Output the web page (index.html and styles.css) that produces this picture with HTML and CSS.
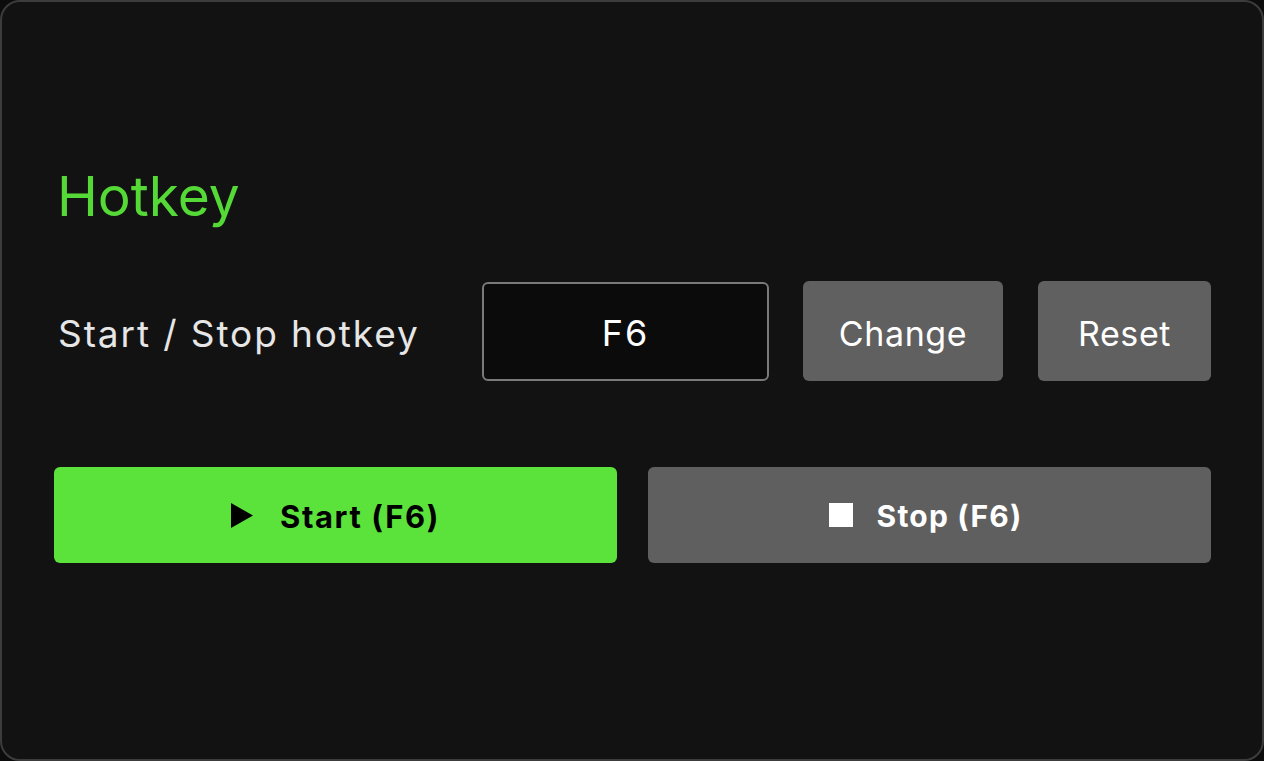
FILE: index.html
```html
<!DOCTYPE html>
<html lang="en">
<head>
    <meta charset="UTF-8">
    <meta name="viewport" content="width=device-width, initial-scale=1.0">
    <title>Hotkey</title>
    <link rel="stylesheet" href="styles.css">
</head>
<body>

<!-- Window -->
<div class="window">
    <h1 class="title">Hotkey</h1>

    <!-- Hotkey row -->
    <div class="hotkey-row">
        <span class="label">Start / Stop hotkey</span>
        <div class="key-box">F6</div>
        <button class="btn btn-change">Change</button>
        <button class="btn btn-reset">Reset</button>
    </div>

    <!-- Start / Stop -->
    <div class="action-row">
        <button class="action action-start">
            <svg width="22" height="25" viewBox="0 0 22 25"><polygon points="0,0 22,12.5 0,25" fill="#000"/></svg>
            <span>Start&nbsp;(F6)</span>
        </button>
        <button class="action action-stop">
            <span class="stop-square"></span>
            <span>Stop (F6)</span>
        </button>
    </div>
</div>

</body>
</html>
```

FILE: styles.css
```css
html, body {
    margin: 0;
    background-color: #0c0c0c;
}
body {
    font-family: Inter, "Liberation Sans", Arial, sans-serif;
}
.window {
    box-sizing: border-box;
    width: 1264px;
    height: 761px;
    background-color: #121212;
    border: 2px solid #3c3c3c;
    border-radius: 20px;
    padding: 163px 51px 0 52px;
}
.title {
    margin: 0 0 0 3px;
    font-size: 55px;
    font-weight: 400;
    line-height: 62px;
    color: #55d936;
}
.hotkey-row {
    display: flex;
    align-items: center;
    margin-top: 54px;
    height: 100px;
}
.label {
    flex: 1;
    margin-left: 4px;
    padding-top: 5px;
    font-size: 37px;
    letter-spacing: 1.9px;
    color: #e6e6e6;
}
.key-box {
    box-sizing: border-box;
    width: 287px;
    height: 99px;
    display: flex;
    justify-content: center;
    align-items: center;
    padding-top: 4px;
    border: 2px solid #7a7a7a;
    border-radius: 6px;
    background-color: #0b0b0b;
    color: #ffffff;
    font-size: 36px;
    letter-spacing: 2px;
    margin-right: 34px;
}
.btn {
    height: 100px;
    border: none;
    border-radius: 6px;
    background-color: #606060;
    color: #ffffff;
    font-family: inherit;
    font-size: 34px;
    letter-spacing: 0.6px;
    padding: 4px 0 0;
}
.btn-change {
    width: 200px;
    margin-right: 35px;
}
.btn-reset {
    width: 173px;
}
.action-row {
    display: grid;
    grid-template-columns: 1fr 1fr;
    gap: 31px;
    margin-top: 86px;
}
.action {
    height: 96px;
    display: flex;
    justify-content: center;
    align-items: center;
    border: none;
    border-radius: 6px;
    font-family: inherit;
    font-size: 30px;
    font-weight: 700;
    letter-spacing: 1px;
    padding: 0;
}
.action span {
    padding-top: 2px;
}
.action-start {
    gap: 27px;
    background-color: #5be33b;
    color: #000000;
    font-size: 31px;
    letter-spacing: 1.6px;
}
.action-stop {
    gap: 24px;
    padding-right: 8px;
    background-color: #5f5f5f;
    color: #ffffff;
    letter-spacing: 1.2px;
}
.stop-square {
    width: 24px;
    height: 24px;
    padding: 0 !important;
    background-color: #ffffff;
}
```
